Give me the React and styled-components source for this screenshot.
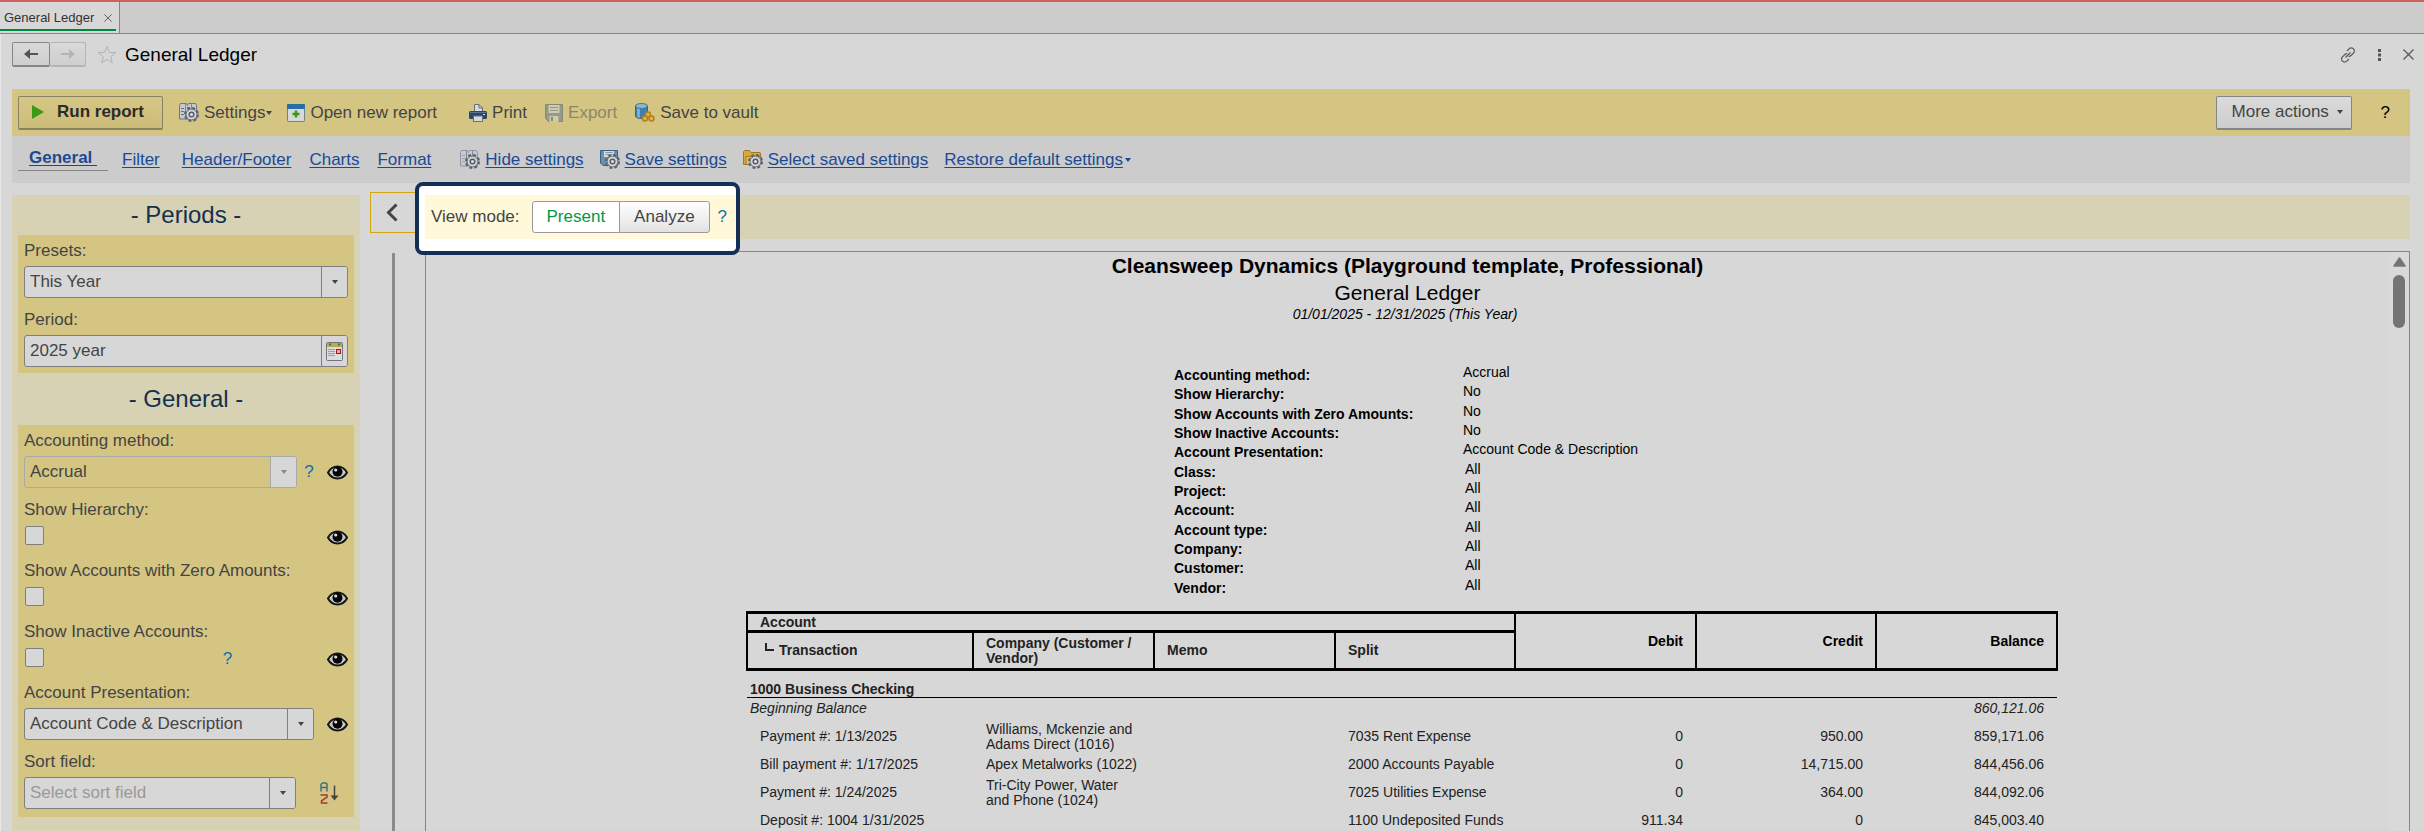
import React, { useState } from "react"
import styled, { createGlobalStyle } from "styled-components"

const GlobalStyle = createGlobalStyle`
  * {
    box-sizing: border-box;
  }
  body {
    margin: 0;
    background: #d7d7d7;
    color: #444;
    font-family: Arial, "Liberation Sans", sans-serif;
    font-size: 17px;
    line-height: 20px;
  }
  button, input, select {
    font: inherit;
    color: inherit;
  }
`

/* ---------- icons ---------- */

const Caret = ({ color = "#444" }) => (
  <svg width="6" height="4" viewBox="0 0 6 4"><path d="M0 0h6L3 4z" fill={color} /></svg>
)

const Gear = ({ x = 5, y = 4 }) => (
  <g transform={`translate(${x} ${y})`}>
    <circle cx="7.5" cy="7.5" r="6" fill="none" stroke="#5b616c" strokeWidth="3" strokeDasharray="2.7 2" />
    <circle cx="7.5" cy="7.5" r="5.4" fill="#d3d5d8" stroke="#6a707a" strokeWidth="1" />
    <circle cx="7.5" cy="7.5" r="2.3" fill="#e0e0e0" stroke="#555c68" strokeWidth="1.5" />
  </g>
)

const SettingsIcon = ({ faded }) => (
  <svg width="20" height="20" viewBox="0 0 20 20">
    <path d="M.5 2.5l1-2h6l1 2 1-2h7l1 2V16H.5z" fill="#c6cad0" stroke={faded ? "#8e97a5" : "#6d7785"} />
    <path d="M6.500 1v15M12.500 1v8" stroke="#7e8896" />
    <path d="M2 5.500h3M2 8.500h3M2 11.500h3M8 4.500h3" stroke={faded ? "#9aa2ad" : "#5e7188"} />
    <Gear />
  </svg>
)

const OpenIcon = () => (
  <svg width="18" height="18" viewBox="0 0 18 18">
    <rect x=".5" y=".5" width="17" height="17" rx="1" fill="#d7dadd" stroke="#77808b" />
    <path d="M0 1a1 1 0 011-1h16a1 1 0 011 1v4H0z" fill="#2a6ea8" />
    <path d="M9 6.500v7M5.500 10h7" stroke="#3c9a10" strokeWidth="2.500" />
  </svg>
)

const PrintIcon = () => (
  <svg width="18" height="18" viewBox="0 0 18 18">
    <path d="M5.500 8V.5H10L13.500 4v4z" fill="#dadada" stroke="#66707c" />
    <path d="M10 .5V4h3.500" fill="none" stroke="#66707c" />
    <rect y="7" width="18" height="8" rx="1.500" fill="#2e4764" />
    <path d="M1 8.500h16" stroke="#5a7794" />
    <path d="M14 10.500h2" stroke="#d7d7d7" />
    <rect x="4.500" y="12" width="9" height="5.500" fill="#dadada" stroke="#66707c" />
  </svg>
)

const ExportIcon = () => (
  <svg width="18" height="18" viewBox="0 0 18 18">
    <path d="M.5.5h17v17h-14l-3-3z" fill="#94998a" stroke="#85897a" />
    <rect x="3.500" y="1" width="11" height="8" fill="#cfccae" />
    <path d="M5 3.500h8M5 6.500h8" stroke="#94998a" />
    <rect x="4.500" y="12" width="9" height="6" fill="#cfccae" />
    <rect x="6" y="13" width="2" height="4" fill="#85897a" />
  </svg>
)

const VaultIcon = () => (
  <svg width="20" height="19" viewBox="0 0 20 19">
    <path d="M.5 3v10c0 1.500 2.500 2.500 6 2.500s6-1 6-2.500V3z" fill="#3f80ae" stroke="#356687" />
    <path d="M2 4v10l3 1V4z" fill="#78b0d0" />
    <ellipse cx="6.500" cy="3" rx="6" ry="2.500" fill="#8cb9cf" stroke="#3d7596" />
    <g fill="#d4b765" stroke="#b97f13" strokeWidth="1.500">
      <circle cx="13" cy="11.500" r="2.500" />
      <circle cx="10" cy="15.500" r="2.500" />
      <circle cx="16.500" cy="15.500" r="2.500" />
    </g>
  </svg>
)

const SaveSettingsIcon = () => (
  <svg width="20" height="20" viewBox="0 0 20 20">
    <path d="M.5.5h17v15H3L.5 13z" fill="#6b8fb1" stroke="#3d5f82" />
    <rect x="4" y="1" width="10" height="6" fill="#d5d9dc" />
    <path d="M5.500 2.500h7M5.500 4.500h7" stroke="#8998a8" />
    <Gear />
  </svg>
)

const FolderIcon = () => (
  <svg width="20" height="20" viewBox="0 0 20 20">
    <path d="M.5 14.500V1.500l1-1h5l1.500 2h9l.5.5v11.500z" fill="#d5a93c" stroke="#a6771c" />
    <path d="M3 14.500V6.500h15v8z" fill="#e0c071" stroke="#a6771c" />
    <Gear />
  </svg>
)

const EyeIcon = () => (
  <svg width="21" height="15" viewBox="0 0 21 15">
    <path d="M1 7.500C3.500 3 7 1.500 10.500 1.500S17.500 3 20 7.500c-2.500 4.500-6 6-9.500 6S3.500 12 1 7.500z" fill="#c9c9c9" stroke="#141414" strokeWidth="2" />
    <circle cx="10.500" cy="6.800" r="5" fill="#050505" />
    <circle cx="8.700" cy="5" r="1.600" fill="#ddd" />
  </svg>
)

const CalendarIcon = () => (
  <svg width="17" height="19" viewBox="0 0 17 19">
    <rect x=".5" y=".5" width="16" height="18" rx="1" fill="#dcdcdc" stroke="#6e7480" />
    <rect x="1" y="1" width="15" height="4" fill="#b5aa58" />
    <path d="M3 2.500h2M12 2.500h2" stroke="#6d6733" strokeWidth="2" />
    <path d="M2 7.500h7M2 9.500h7M2 11.500h7M2 13.500h7" stroke="#9a9ea8" />
    <rect x="10.500" y="7.500" width="4" height="4" fill="#c9b6a0" stroke="#c00c0c" />
  </svg>
)

const SortIcon = () => (
  <svg width="19" height="22" viewBox="0 0 19 22" fill="none">
    <path d="M1 9.500V2.500L2.500 1H6l1 1v7.500M1 5.500h6" stroke="#3f7184" strokeWidth="1.500" />
    <path d="M.5 13H7v2l-5.500 4v2H7.500" stroke="#a5382c" strokeWidth="1.500" />
    <path d="M14.500 3.500v11" stroke="#444" strokeWidth="1.500" />
    <path d="M10.500 13.500h8l-4 5z" fill="#444" />
  </svg>
)

const ArrowIcon = ({ color, flip }) => (
  <svg width="14" height="12" viewBox="0 0 14 12">
    <path d={flip ? "M0 5h8V1l6 5-6 5V7H0z" : "M14 5H6V1L0 6l6 5V7h8z"} fill={color} />
  </svg>
)

const StarIcon = () => (
  <svg width="20" height="20" viewBox="0 0 20 20">
    <path d="M10 1.500l2.300 5.800 6.200.4-4.800 4 1.600 6.200-5.300-3.400-5.300 3.400 1.600-6.200-4.800-4 6.200-.4z" fill="none" stroke="#b3b3b3" />
  </svg>
)

const LinkIcon = () => (
  <svg width="16" height="16" viewBox="0 0 16 16" fill="none" stroke="#5c5c5c" strokeWidth="1.200">
    <path d="M7 4l2-2.200a3 3 0 014.400 0 3 3 0 010 4.400L11 8.500a3 3 0 01-2.500.8" />
    <path d="M9 12l-2.200 2.200a3 3 0 01-4.300 0 3 3 0 010-4.400L4.800 7.500a3 3 0 012.400-.8" />
    <path d="M5.500 10.500l5-5" />
  </svg>
)

const CrossIcon = ({ size = 11 }) => (
  <svg width={size} height={size} viewBox="0 0 11 11"><path d="M.5.5l10 10M10.500.5l-10 10" stroke="#555" strokeWidth="1.200" /></svg>
)

/* ---------- data ---------- */

const settingTabs = ["Filter", "Header/Footer", "Charts", "Format"]

const parameters = [
  ["Accounting method:", "Accrual"],
  ["Show Hierarchy:", "No"],
  ["Show Accounts with Zero Amounts:", "No"],
  ["Show Inactive Accounts:", "No"],
  ["Account Presentation:", "Account Code & Description"],
  ["Class:", "All"],
  ["Project:", "All"],
  ["Account:", "All"],
  ["Account type:", "All"],
  ["Company:", "All"],
  ["Customer:", "All"],
  ["Vendor:", "All"],
]

const transactions = [
  { name: "Payment #: 1/13/2025", company: "Williams, Mckenzie and Adams Direct (1016)", split: "7035 Rent Expense", debit: "0", credit: "950.00", balance: "859,171.06" },
  { name: "Bill payment #: 1/17/2025", company: "Apex Metalworks (1022)", split: "2000 Accounts Payable", debit: "0", credit: "14,715.00", balance: "844,456.06" },
  { name: "Payment #: 1/24/2025", company: "Tri-City Power, Water and Phone (1024)", split: "7025 Utilities Expense", debit: "0", credit: "364.00", balance: "844,092.06" },
  { name: "Deposit #: 1004 1/31/2025", company: "", split: "1100 Undeposited Funds", debit: "911.34", credit: "0", balance: "845,003.40" },
]

/* ---------- parts ---------- */

const SelectField = ({ id, label, value, width, disabled, placeholder, children }) => (
  <Field>
    <label htmlFor={id}>{label}</label>
    <FieldRow>
      <Box $width={width} $disabled={disabled}>
        <Select id={id} disabled={disabled} $placeholder={placeholder} defaultValue={value}>
          <option>{value}</option>
        </Select>
        <BoxButton type="button" disabled={disabled} aria-label={`Open ${label}`}>
          <Caret color={disabled ? "#888" : "#444"} />
        </BoxButton>
      </Box>
      {children}
    </FieldRow>
  </Field>
)

const CheckField = ({ id, label, help }) => (
  <Field>
    <label htmlFor={id}>{label}</label>
    <CheckRow>
      <Check id={id} type="checkbox" />
      {help ? <Help type="button" aria-label="Help">?</Help> : null}
      <IconButton type="button" aria-label="Visibility"><EyeIcon /></IconButton>
    </CheckRow>
  </Field>
)

const Sidebar = () => (
  <Side>
    <SideTitle>- Periods -</SideTitle>
    <Group>
      <SelectField id="presets" label="Presets:" value="This Year" />
      <Field>
        <label htmlFor="period">Period:</label>
        <Box>
          <TextInput id="period" type="text" defaultValue="2025 year" />
          <BoxButton type="button" aria-label="Choose period"><CalendarIcon /></BoxButton>
        </Box>
      </Field>
    </Group>
    <SideTitle $tall>- General -</SideTitle>
    <Group>
      <SelectField id="method" label="Accounting method:" value="Accrual" width="273px" disabled>
        <Help type="button" aria-label="Help">?</Help>
        <IconButton type="button" aria-label="Visibility"><EyeIcon /></IconButton>
      </SelectField>
      <CheckField id="hierarchy" label="Show Hierarchy:" />
      <CheckField id="zero" label="Show Accounts with Zero Amounts:" />
      <CheckField id="inactive" label="Show Inactive Accounts:" help />
      <SelectField id="presentation" label="Account Presentation:" value="Account Code & Description" width="290px">
        <IconButton type="button" aria-label="Visibility"><EyeIcon /></IconButton>
      </SelectField>
      <SelectField id="sort" label="Sort field:" value="Select sort field" width="272px" placeholder="true">
        <SortButton type="button" aria-label="Sort order"><SortIcon /></SortButton>
      </SelectField>
    </Group>
  </Side>
)

const Report = () => (
  <Sheet>
    <ReportTitle>Cleansweep Dynamics (Playground template, Professional)</ReportTitle>
    <ReportName>General Ledger</ReportName>
    <ReportDate>01/01/2025 - 12/31/2025 (This Year)</ReportDate>
    <Params>
      {parameters.map(([name, value]) => (
        <React.Fragment key={name}>
          <dt>{name}</dt>
          <ParamValue $indent={value === "All"}>{value}</ParamValue>
        </React.Fragment>
      ))}
    </Params>
    <Table>
      <colgroup>
        <col width="226" /><col width="181" /><col width="181" /><col width="180" />
        <col width="181" /><col width="180" /><col width="181" />
      </colgroup>
      <thead>
        <tr>
          <th colSpan="4">Account</th>
          <NumHead rowSpan="2">Debit</NumHead>
          <NumHead rowSpan="2">Credit</NumHead>
          <NumHead rowSpan="2">Balance</NumHead>
        </tr>
        <SubHead>
          <th><Branch width="9" height="9" viewBox="0 0 9 9"><path d="M1 0v7h8" fill="none" stroke="#222" strokeWidth="2" /></Branch>Transaction</th>
          <th>Company (Customer / Vendor)</th>
          <th>Memo</th>
          <th>Split</th>
        </SubHead>
      </thead>
      <tbody>
        <AccountRow><td colSpan="7">1000 Business Checking</td></AccountRow>
        <OpeningRow>
          <td colSpan="6">Beginning Balance</td>
          <Num>860,121.06</Num>
        </OpeningRow>
        {transactions.map(t => (
          <tr key={t.name}>
            <td>{t.name}</td>
            <td>{t.company}</td>
            <td></td>
            <td>{t.split}</td>
            <Num>{t.debit}</Num>
            <Num>{t.credit}</Num>
            <Num>{t.balance}</Num>
          </tr>
        ))}
      </tbody>
    </Table>
  </Sheet>
)

const App = () => {
  const [mode, setMode] = useState("Present")

  return (
    <Page>
      <GlobalStyle />
      <TabBar>
        <Tab>
          <TabText>General Ledger</TabText>
          <IconButton type="button" aria-label="Close tab"><CrossIcon size={8} /></IconButton>
        </Tab>
      </TabBar>
      <Window>
        <Header>
          <NavButton type="button" aria-label="Back"><ArrowIcon color="#555" /></NavButton>
          <NavButton type="button" aria-label="Forward" disabled><ArrowIcon color="#b5b5b5" flip /></NavButton>
          <StarButton type="button" aria-label="Favorite"><StarIcon /></StarButton>
          <Title>General Ledger</Title>
          <HeaderTools>
            <IconButton type="button" aria-label="Get link"><LinkIcon /></IconButton>
            <IconButton type="button" aria-label="More">
              <svg width="3" height="12" viewBox="0 0 3 12" fill="#555"><rect width="3" height="3" /><rect y="4.500" width="3" height="3" /><rect y="9" width="3" height="3" /></svg>
            </IconButton>
            <IconButton type="button" aria-label="Close"><CrossIcon /></IconButton>
          </HeaderTools>
        </Header>

        <Toolbar>
          <RunButton type="button">
            <svg width="12" height="14" viewBox="0 0 12 14"><path d="M0 0l12 7-12 7z" fill="#3b9a14" /></svg>
            Run report
          </RunButton>
          <Tool type="button" $left={16}><SettingsIcon />Settings<ToolCaret><Caret /></ToolCaret></Tool>
          <Tool type="button" $left={15}><OpenIcon />Open new report</Tool>
          <Tool type="button" $left={32}><PrintIcon />Print</Tool>
          <Tool type="button" $left={18} disabled><ExportIcon />Export</Tool>
          <Tool type="button" $left={18}><VaultIcon />Save to vault</Tool>
          <MoreButton type="button">More actions <Caret /></MoreButton>
          <HelpButton type="button">?</HelpButton>
        </Toolbar>

        <SettingsBar>
          <ActiveTab href="#general">General&nbsp;</ActiveTab>
          <TabLinks>
            {settingTabs.map(t => <TextLink key={t} href={`#${t}`}>{t}</TextLink>)}
          </TabLinks>
          <Actions>
            <Action><SettingsIcon faded /><TextLink href="#hide">Hide settings</TextLink></Action>
            <Action><SaveSettingsIcon /><TextLink href="#save">Save settings</TextLink></Action>
            <Action><FolderIcon /><TextLink href="#select">Select saved settings</TextLink></Action>
            <Action $tight><TextLink href="#restore">Restore default settings</TextLink><Caret color="#1b4a94" /></Action>
          </Actions>
        </SettingsBar>

        <Body>
          <Sidebar />
          <Main>
            <ViewRow>
              <Collapse type="button" aria-label="Collapse panel">
                <svg width="12" height="19" viewBox="0 0 12 19"><path d="M10.500 1.500l-8 8 8 8" fill="none" stroke="#444" strokeWidth="3" /></svg>
              </Collapse>
              <ViewBar>
                <Spotlight>
                  <ViewControls>
                    View mode:
                    <Segments>
                      {["Present", "Analyze"].map(m => (
                        <Segment key={m} type="button" $active={mode === m} onClick={() => setMode(m)}>{m}</Segment>
                      ))}
                    </Segments>
                    <Help type="button" aria-label="Help">?</Help>
                  </ViewControls>
                </Spotlight>
              </ViewBar>
            </ViewRow>
            <DocRow>
              <Splitter />
              <Doc>
                <DocScroll><Report /></DocScroll>
                <ScrollBar>
                  <svg width="13" height="10" viewBox="0 0 13 10"><path d="M6.500 1L12 9H1z" fill="#747474" stroke="#747474" strokeWidth="1.500" strokeLinejoin="round" /></svg>
                  <Thumb />
                </ScrollBar>
              </Doc>
            </DocRow>
          </Main>
        </Body>
      </Window>
    </Page>
  )
}

/* ---------- styles ---------- */

const Page = styled.div`
  height: 100vh;
  overflow: hidden;
  display: flex;
  flex-direction: column;
  border-top: 2px solid #d3605e;
`
const TabBar = styled.div`
  flex: none;
  display: flex;
  height: 32px;
  background: #ccc;
  border-bottom: 1px solid #858585;
`
const IconButton = styled.button`
  display: flex;
  padding: 0;
  border: 0;
  background: none;
`
const Tab = styled.div`
  display: flex;
  align-items: center;
  gap: 10px;
  padding: 0 7px 0 4px;
  background: linear-gradient(#00873f, #00873f) left 27px / calc(100% - 3px) 2px no-repeat #d7d7d7;
  border-right: 1px solid #858585;
`
const TabText = styled.span`
  font-size: 13px;
  color: #333;
`
const Window = styled.div`
  flex: 1;
  min-height: 0;
  display: flex;
  flex-direction: column;
  padding: 0 14px 0 11px;
  border-left: 1px solid #e8e8e8;
`
const Header = styled.header`
  flex: none;
  display: flex;
  align-items: center;
  height: 55px;
  padding-bottom: 14px;
`
const NavButton = styled.button`
  display: flex;
  align-items: center;
  justify-content: center;
  width: 38px;
  height: 25px;
  padding: 0;
  border: 1px solid ${p => (p.disabled ? "#b5b5b5" : "#858585")};
  border-bottom-width: 2px;
  border-radius: 2px;
  background: linear-gradient(#d9d9d9, #cfcfcf);
  & + & {
    width: 36px;
    border-left: 0;
  }
`
const StarButton = styled(IconButton)`
  margin: 0 8px 0 11px;
`
const Title = styled.h1`
  margin: 0;
  font-size: 19px;
  font-weight: normal;
  color: #000;
`
const HeaderTools = styled.div`
  display: flex;
  align-items: center;
  gap: 22px;
  margin-left: auto;
  margin-right: -4px;
`
const Toolbar = styled.div`
  flex: none;
  display: flex;
  align-items: center;
  height: 47px;
  padding: 0 6px;
  background: #d4c583;
`
const RunButton = styled.button`
  display: flex;
  align-items: center;
  gap: 13px;
  width: 145px;
  height: 34px;
  padding: 0 13px;
  border: 1px solid #87825f;
  border-bottom-width: 2px;
  border-radius: 2px;
  background: linear-gradient(#d6c785, #cbbc7a);
  color: #2b2b2b;
  font-weight: bold;
  white-space: nowrap;
`
const Tool = styled.button`
  display: flex;
  align-items: center;
  gap: 5px;
  margin-left: ${p => p.$left}px;
  padding: 0;
  border: 0;
  background: none;
  white-space: nowrap;
  &:disabled {
    color: #8d8767;
  }
`
const ToolCaret = styled.span`
  display: flex;
  margin-left: -4px;
`
const MoreButton = styled.button`
  display: flex;
  align-items: center;
  justify-content: space-between;
  width: 136px;
  height: 34px;
  margin-left: auto;
  padding: 0 8px 0 15px;
  border: 1px solid #858585;
  border-bottom-width: 2px;
  border-radius: 2px;
  background: linear-gradient(#dadada, #cdcdcd);
`
const HelpButton = styled.button`
  margin: 0 14px 0 29px;
  padding: 0;
  border: 0;
  background: none;
  color: #000;
`
const SettingsBar = styled.nav`
  flex: none;
  display: flex;
  align-items: center;
  height: 47px;
  padding: 0 6px;
  background: #ccc;
`
const TextLink = styled.a`
  color: #1b4a94;
  text-underline-offset: 2px;
  white-space: nowrap;
`
const ActiveTab = styled(TextLink)`
  width: 90px;
  padding: 0 0 2px 11px;
  border-bottom: 1px solid #858585;
  font-weight: bold;
`
const TabLinks = styled.div`
  display: flex;
  gap: 18px;
  margin-left: 14px;
  a:first-child {
    margin-right: 4px;
  }
`
const Actions = styled.div`
  display: flex;
  gap: 16px;
  margin-left: 29px;
`
const Action = styled.span`
  display: flex;
  align-items: center;
  gap: ${p => (p.$tight ? 2 : 5)}px;
`
const Body = styled.div`
  flex: 1;
  min-height: 0;
  display: flex;
  gap: 10px;
`
const Side = styled.aside`
  flex: none;
  width: 348px;
  margin-top: 12px;
  padding: 0 6px;
  background: #d7d2b3;
`
const SideTitle = styled.h2`
  margin: 0;
  font-size: 24px;
  font-weight: normal;
  line-height: ${p => (p.$tall ? 52 : 40)}px;
  text-align: center;
  color: #14304f;
`
const Group = styled.section`
  display: flex;
  flex-direction: column;
  gap: 12px;
  padding: 6px;
  background: #d4c583;
  &:last-child {
    padding-bottom: 8px;
  }
`
const Field = styled.div`
  display: flex;
  flex-direction: column;
  gap: 5px;
`
const FieldRow = styled.div`
  display: flex;
  align-items: center;
  justify-content: space-between;
`
const CheckRow = styled(FieldRow)`
  height: 24px;
  padding-left: 1px;
`
const Box = styled.div`
  display: flex;
  width: ${p => p.$width || "100%"};
  height: 32px;
  border: 1px solid ${p => (p.$disabled ? "#a9a9a9" : "#7f7f7f")};
  border-radius: 3px;
  background: ${p => (p.$disabled ? "#d4c583" : "#d7d7d7")};
`
const Select = styled.select`
  flex: 1;
  min-width: 0;
  padding: 0 5px;
  border: 0;
  background: none;
  appearance: none;
  color: ${p => (p.$placeholder ? "#999" : "#444")};
  opacity: 1;
`
const TextInput = styled.input`
  flex: 1;
  min-width: 0;
  padding: 0 5px;
  border: 0;
  background: none;
`
const BoxButton = styled.button`
  display: flex;
  align-items: center;
  justify-content: center;
  width: 26px;
  padding: 0;
  border: 0;
  border-left: 1px solid #7f7f7f;
  border-radius: 0 2px 2px 0;
  background: #d7d7d7;
  &:disabled {
    border-left-color: #a9a9a9;
  }
`
const Check = styled.input`
  align-self: flex-start;
  width: 19px;
  height: 19px;
  margin: 1px 0 0;
  border: 1px solid #7f7f7f;
  border-radius: 2px;
  background: #d7d7d7;
  appearance: none;
  &:checked {
    box-shadow: inset 0 0 0 4px #d7d7d7;
    background: #444;
  }
`
const Help = styled.button`
  padding: 0;
  border: 0;
  background: none;
  color: #0f6fae;
  ${FieldRow} > & {
    margin-right: 6px;
  }
  ${CheckRow} > & {
    margin-left: 90px;
  }
`
const SortButton = styled(IconButton)`
  margin-right: 9px;
`
const Main = styled.main`
  flex: 1;
  min-width: 0;
  display: flex;
  flex-direction: column;
  padding-top: 9px;
`
const ViewRow = styled.div`
  flex: none;
  display: flex;
  align-items: flex-start;
`
const Collapse = styled.button`
  width: 55px;
  height: 41px;
  padding: 0 0 0 15px;
  display: flex;
  align-items: center;
  border: 1px solid #d2a70f;
  background: none;
`
const ViewBar = styled.div`
  position: relative;
  flex: 1;
  height: 44px;
  margin: 3px 0 12px;
  background: #d7d2b3;
`
/* highlight frame lies over the toolbar edge and the document border */
const Spotlight = styled.div`
  position: absolute;
  z-index: 1;
  top: -13px;
  left: -10px;
  padding: 9px 0 12px 6px;
  border: 4px solid #132f55;
  border-radius: 8px;
  background: #fff;
`
const ViewControls = styled.div`
  display: flex;
  align-items: center;
  height: 44px;
  padding: 0 9px 0 6px;
  background: #fff9d9;
  white-space: nowrap;
`
const Segments = styled.div`
  display: flex;
  height: 32px;
  margin: 0 8px 0 12px;
`
const Segment = styled.button`
  padding: 0 14px;
  border: 1px solid #9a9a9a;
  border-radius: 3px 0 0 3px;
  background: ${p => (p.$active ? "#fff" : "linear-gradient(#fff, #e2e2e2)")};
  color: ${p => (p.$active ? "#009646" : "#444")};
  & + & {
    margin-left: -1px;
    border-radius: 0 3px 3px 0;
  }
`
const DocRow = styled.div`
  flex: 1;
  min-height: 0;
  display: flex;
`
const Splitter = styled.div`
  width: 3px;
  margin: 2px 30px 0 22px;
  background: #8a8a8a;
`
const Doc = styled.div`
  flex: 1;
  min-width: 0;
  display: flex;
  border: 1px solid #858585;
  border-bottom: 0;
`
const DocScroll = styled.div`
  flex: 1;
  min-width: 0;
  overflow: hidden;
`
const ScrollBar = styled.div`
  flex: none;
  display: flex;
  flex-direction: column;
  align-items: center;
  gap: 8px;
  width: 20px;
  padding-top: 5px;
  background: #d9d9d9;
`
const Thumb = styled.div`
  width: 12px;
  height: 53px;
  border-radius: 6px;
  background: #747474;
`
const Sheet = styled.article`
  max-width: 1323px;
  margin: 0 auto;
  font-size: 14px;
  line-height: 15px;
  color: #222;
`
const ReportTitle = styled.h2`
  margin: 0;
  font-size: 21px;
  line-height: 28px;
  text-align: center;
  color: #000;
`
const ReportName = styled.div`
  font-size: 21px;
  line-height: 25px;
  text-align: center;
  color: #000;
`
const ReportDate = styled.div`
  padding-right: 5px;
  font-style: italic;
  line-height: 18px;
  text-align: center;
  color: #000;
`
const Params = styled.dl`
  display: grid;
  grid-template-columns: 289px 1fr;
  grid-auto-rows: 1fr;
  height: 232px;
  margin: 42px 0 0 428px;
  color: #000;
  dt {
    padding-top: 3px;
    font-weight: bold;
  }
`
const ParamValue = styled.dd`
  margin: 0;
  padding-left: ${p => (p.$indent ? 2 : 0)}px;
`
const Table = styled.table`
  width: 1312px;
  margin-top: 14px;
  border-collapse: collapse;
  table-layout: fixed;
  th {
    height: 19px;
    padding: 0 12px;
    border: solid #000;
    border-width: 3px 2px;
    text-align: left;
  }
  td {
    height: 21px;
    padding: 3px 13px 2px;
  }
  td:nth-child(2) {
    padding-right: 16px;
  }
  td:nth-child(4) {
    padding-right: 0;
  }
`
const NumHead = styled.th`
  && {
    color: #000;
    text-align: right;
  }
`
const SubHead = styled.tr`
  && th {
    height: 38px;
  }
`
const Branch = styled.svg`
  margin: 0 5px 3px;
`
const AccountRow = styled.tr`
  && td {
    height: 28px;
    padding: 10px 3px 0;
    border-bottom: 1px solid #000;
    font-weight: bold;
  }
`
const OpeningRow = styled.tr`
  font-style: italic;
  && td:first-child {
    padding-left: 3px;
  }
`
const Num = styled.td`
  &&& {
    padding-right: 13px;
    text-align: right;
  }
`

export default App
